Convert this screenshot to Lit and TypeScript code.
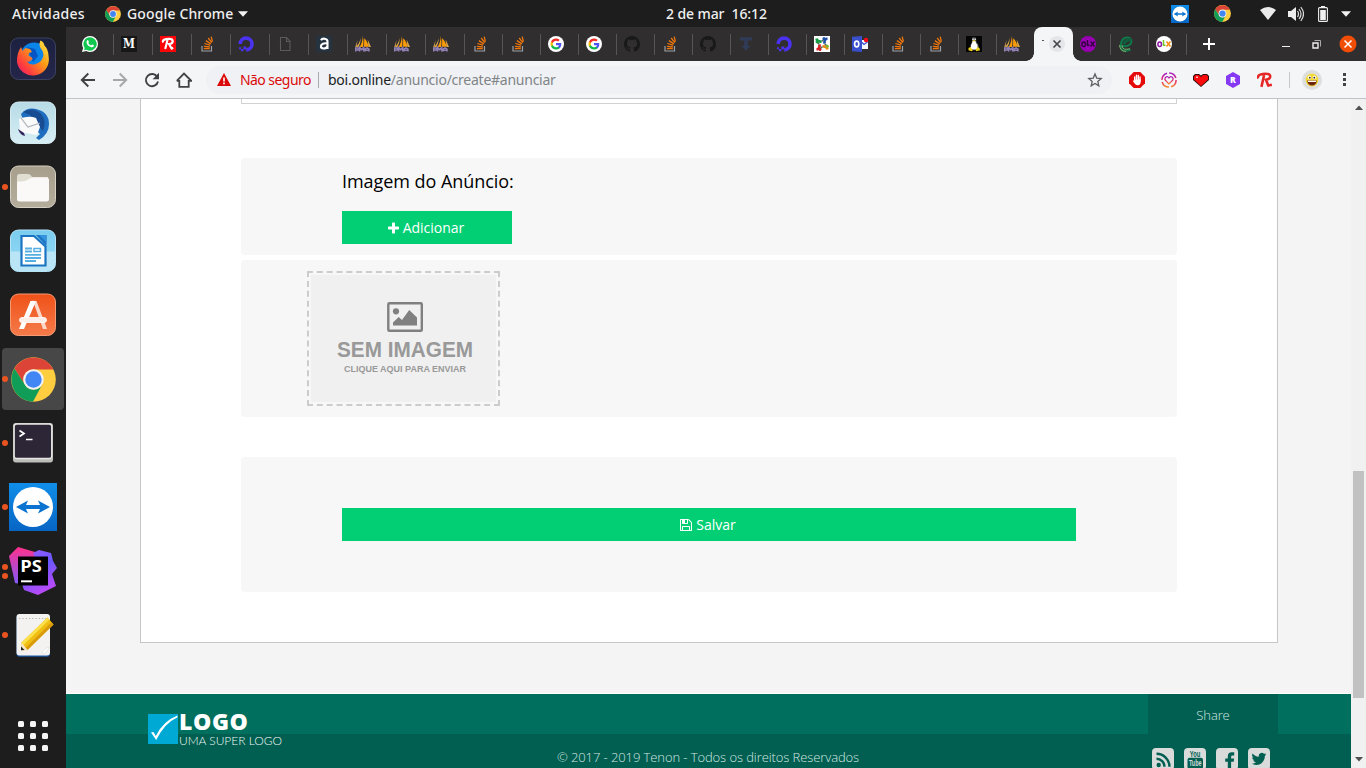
import { LitElement, html, svg, css } from "lit";
import { customElement } from "lit/decorators.js";

const chrome = (size: number) => html`<svg width=${size} height=${size} viewBox="1.5 1.5 45 45">
  <circle cx="24" cy="24" r="22.3" fill="#ffcd40" />
  <path d="M4.9 13A22.3 22.3 0 0 1 43.9 14L24 14A10 10 0 0 0 15.3 29Z" fill="#db4437" />
  <path d="M4.9 13L15.3 29A10 10 0 0 0 32.7 29L23.5 46.3A22.3 22.3 0 0 1 4.9 13Z" fill="#0f9d58" />
  <circle cx="24" cy="24" r="10.3" fill="#f1f1f1" /><circle cx="24" cy="24" r="8.2" fill="#4285f4" />
</svg>`;

const arrowDown = html`<svg width="10" height="6" viewBox="0 0 10 6"><path d="M0 .3h10L5 5.7z" fill="#f2f2f2" /></svg>`;

const birdPath = "M23.953 4.57a10 10 0 01-2.825.775 4.958 4.958 0 002.163-2.723c-.951.555-2.005.959-3.127 1.184a4.92 4.92 0 00-8.384 4.482C7.69 8.095 4.067 6.13 1.64 3.162a4.822 4.822 0 00-.666 2.475c0 1.71.87 3.213 2.188 4.096a4.904 4.904 0 01-2.228-.616v.06a4.923 4.923 0 003.946 4.827 4.996 4.996 0 01-2.212.085 4.936 4.936 0 004.604 3.417 9.867 9.867 0 01-6.102 2.105c-.39 0-.779-.023-1.17-.067a13.995 13.995 0 007.557 2.209c9.053 0 13.998-7.496 13.998-13.985 0-.21 0-.42-.015-.63A9.935 9.935 0 0024 4.59z";

const favicons: Record<string, unknown> = {
  whatsapp: svg`<path d="M8 0a8 8 0 0 1 0 16q-2 0-3.800-1L0 16l1.100-4A8 8 0 0 1 8 0z" fill="#fff"/><path d="M8 1.300a6.700 6.700 0 1 1-3.500 12.400L2 14.300l.700-2.400A6.700 6.700 0 0 1 8 1.300z" fill="#10c850"/><path d="M5.300 4.200q.700-.5 1 .2l.6 1.400q.1.400-.6 1.100 1 1.800 2.700 2.500.900-1 1.200-.9l1.600.8q.4.300-.1 1.300-.9 1-2.400.7Q5.600 10.200 4.600 7q-.4-1.700.7-2.800z" fill="#fff"/>`,
  medium: svg`<path d="M0 0h16v16H0z" fill="#171717"/><text x="8" y="12.300" text-anchor="middle" font-family="DejaVu Serif" font-weight="700" font-size="12" textLength="12" lengthAdjust="spacingAndGlyphs" fill="#fff">M</text>`,
  rr: svg`<path d="M0 0h16v16H0z" fill="#fb0509"/><path d="M3.200 6.500C2 4 5 2.800 9 2.800c5 0 5 4.600 0 5.200l2.600 4.600 1.600-.8M7.800 3L5.200 13" fill="none" stroke="#fff" stroke-width="2.200"/>`,
  so: svg`<path d="M3 10v5h9.500v-5" fill="none" stroke="#9aa0a6" stroke-width="1.200"/><path d="M4.800 12.700h6M4.900 10.400l6 .6M5.400 7.500l5.700 1.700M6.900 4.600l5 3.300M9.200 2l3.600 4.700M12.200.7l1.200 5" stroke="#f0760b" stroke-width="1.300"/>`,
  ocean: svg`<path d="M8.200 13.900A5.900 5.900 0 1 0 2.200 8" fill="none" stroke="#4a32f0" stroke-width="3.600"/><path d="M5.400 10.500h2.900v2.900H5.400zM3 13.100h2.300v2.200H3zM1 11.200h2v2H1z" fill="#4a32f0"/>`,
  file: svg`<path d="M3.500 1.500h6l3.500 3.700v9.300H3.500zM9.500 1.500v4H13" fill="none" stroke="#5c5a5b" stroke-width="1.100"/>`,
  letterA: svg`<path d="M0 0h16v16H0z" fill="#24333f"/><path d="M5 4.200C6 2 11.500 2 11.500 5.500V13M11.400 7.400C8 7 4.900 7.500 4.900 10.300s5 3.200 6.500 0" fill="none" stroke="#fff" stroke-width="2.100"/>`,
  pma: svg`<path d="M7.800 0c.5 3 1.200 8 .2 11H4.700C6.500 8 7.700 4 7.800 0zM9.200 2.200c2.400 2.300 4.200 5.200 4.200 8.600H9z" fill="#f79a08"/><path d="M12.700 3.500l3.300 7.500h-2.600zM5.600 2c.1 4-.9 7-2.200 9H.6C3.300 9 4.900 6 5.600 2z" fill="#dba548"/><path d="M2.500 4l-.8 6.500-1.500.8z" fill="#d0a04c"/><path d="M.7 15.600v-3.700h2.800v2H.7m4 1.700v-4l2 2 2-2v4m1.300 0v-2.500l2-1.300 2 1.300v2.500m-3.500-1.300h3.300" fill="none" stroke="#9181b6" stroke-width="1.500"/>`,
  google: svg`<circle cx="8" cy="8" r="8" fill="#fff"/><g transform="translate(2 2) scale(.5)"><path fill="#4f55f5" d="M22.560 12.250c0-.78-.07-1.530-.2-2.250H12v4.260h5.920c-.26 1.370-1.040 2.530-2.210 3.310v2.770h3.570c2.080-1.920 3.280-4.740 3.280-8.090z"/><path fill="#12ba49" d="M12 23c2.970 0 5.460-.98 7.280-2.660l-3.570-2.770c-.98.66-2.230 1.060-3.710 1.060-2.860 0-5.290-1.930-6.160-4.530H2.180v2.840C3.990 20.530 7.700 23 12 23z"/><path fill="#fbbc05" d="M5.840 14.090c-.22-.66-.35-1.360-.35-2.090s.13-1.430.35-2.090V7.070H2.180C1.430 8.550 1 10.220 1 12s.43 3.450 1.180 4.930z"/><path fill="#f42a25" d="M12 5.380c1.620 0 3.060.56 4.210 1.640l3.150-3.150C17.450 2.090 14.970 1 12 1 7.700 1 3.990 3.470 2.180 7.070l3.660 2.840c.87-2.600 3.300-4.530 6.160-4.530z"/></g>`,
  github: svg`<path fill="#191919" d="M8 0C3.580 0 0 3.580 0 8c0 3.540 2.290 6.530 5.470 7.590.4.070.55-.17.55-.38 0-.19-.01-.82-.01-1.490-2.010.37-2.530-.49-2.690-.94-.09-.23-.48-.94-.82-1.130-.28-.15-.68-.52-.01-.53.63-.01 1.080.58 1.230.82.72 1.210 1.870.87 2.330.66.07-.52.28-.87.51-1.070-1.780-.2-3.640-.89-3.640-3.950 0-.87.31-1.590.82-2.150-.08-.2-.36-1.020.08-2.120 0 0 .67-.21 2.200.82.64-.18 1.320-.27 2-.27s1.360.09 2 .27c1.530-1.040 2.200-.82 2.200-.82.44 1.100.16 1.920.08 2.120.51.56.82 1.270.82 2.150 0 3.070-1.870 3.750-3.650 3.950.29.25.54.73.54 1.480 0 1.070-.01 1.930-.01 2.200 0 .21.15.46.55.38A8.010 8.010 0 0 0 16 8c0-4.420-3.580-8-8-8z"/>`,
  tee: svg`<path d="M2 1.300h12v3.300H9.800v5.200h2.700L8 14.700 3.500 9.800h2.700V4.600H2z" fill="#303b58"/>`,
  joomla: svg`<path d="M0 0h16v16H0z" fill="#fff"/><path d="M2.500 2.500q.5 3.500 5 3" fill="none" stroke="#159c44" stroke-width="2.700"/><path d="M13.500 2.500q-3.500.5-3 5" fill="none" stroke="#1c50aa" stroke-width="2.700"/><path d="M13.500 13.500q-.5-3.500-5-3" fill="none" stroke="#f18b18" stroke-width="2.700"/><path d="M2.500 13.500q3.500-.5 3-5" fill="none" stroke="#d81b24" stroke-width="2.700"/><path d="M7.500 5.500l3-3M10.500 7.500l3 3M8.500 10.500l-3 3M5.500 8.500l-3-2.500" stroke="#4b6a58" stroke-width="1.400"/><circle cx="3" cy="5.800" r="1.500" fill="#159c44"/><circle cx="10" cy="2.500" r="1.500" fill="#1c50aa"/><circle cx="13.300" cy="10.200" r="1.500" fill="#7ab92b"/><circle cx="6" cy="13.500" r="1.500" fill="#d81b24"/>`,
  outlook: svg`<path d="M9 4h7v9H9z" fill="#f5f7ff"/><path d="M0 .8L10 0v16L0 15.200z" fill="#3850cc"/><ellipse cx="4.700" cy="8" rx="2.100" ry="2.900" fill="none" stroke="#fff" stroke-width="1.600"/><path d="M10 6.500l2 2 4-3" fill="none" stroke="#3850cc" stroke-width="1.300"/><circle cx="14" cy="4" r="2.200" fill="#f50b14"/>`,
  linux: svg`<path d="M0 0h16v16H0z" fill="#050505"/><path d="M6 2q2-2 4 0l.5 4q3 3 2 7l-4.500 1.500L4 12q0-3 2-6z" fill="#555"/><path d="M6.500 5h3q0 2 2 4v4.500H5V9q1.500-2 1.500-4z" fill="#fff"/><path d="M6.500 4.200h3L8 6zM2.500 12l2-1 2.500 3.300-1.500 1-3-1zM13.500 12l-2-1-2 3.300 1 1 3.500-1z" fill="#f0d21a"/><circle cx="7" cy="3.200" r=".8" fill="#fff"/><circle cx="9.200" cy="3.200" r=".8" fill="#fff"/>`,
  olxPurple: svg`<circle cx="8" cy="8" r="8" fill="#9a00b3"/><ellipse cx="3.700" cy="8.300" rx="1.800" ry="2.300" fill="none" stroke="#350041" stroke-width="1.500"/><path d="M7.500 4v5.200h2M10.500 5.500l4 5M14.500 5.500l-4 5" fill="none" stroke="#350041" stroke-width="1.500"/>`,
  olx: svg`<circle cx="8" cy="8" r="8" fill="#fff"/><ellipse cx="3.700" cy="8.300" rx="1.800" ry="2.300" fill="none" stroke="#8d18a8" stroke-width="1.500"/><path d="M7.500 4v5.200h2" fill="none" stroke="#73c82c" stroke-width="1.500"/><path d="M10.500 5.500l4 5M14.500 5.500l-4 5" fill="none" stroke="#f58a10" stroke-width="1.500"/>`,
  letterE: svg`<path d="M3.400 10C7 11 14 9.500 13.300 5 12.500 0 5.500.5 3.500 5.500 1.500 11 3.500 15 7.500 14.800q2.500 0 5-1.300" fill="none" stroke="#117a4b" stroke-width="2"/><path d="M5.500 8.500Q8 3 13 4" fill="none" stroke="#115c3e" stroke-width="3.500"/><path d="M1.500 9Q2 15.500 8 15.500M4 9Q4 13.300 8 13.300l4-.5" fill="none" stroke="#7cae6d"/>`,
};

const favicon = (name: string) => html`<svg width="16" height="16" viewBox="0 0 16 16">${favicons[name]}</svg>`;

const wideTabs = ["whatsapp", "medium", "rr", "so", "ocean", "file", "letterA", "pma", "pma", "pma"];
const tabs = ["so", "so", "google", "google", "github", "so", "github", "tee", "ocean", "joomla", "outlook", "so", "so", "linux", "pma"];
const tabsAfter = ["olxPurple", "letterE", "olx"];

const teamviewer = (size: number) => html`<svg width=${size} height=${size} viewBox="0 0 48 48">
  <defs><linearGradient id="tv" x2="0" y2="1"><stop stop-color="#108ee9" /><stop offset="1" stop-color="#0765c4" /></linearGradient></defs>
  <path d="M0 0h48v48H0z" fill="url(#tv)" /><circle cx="24" cy="24" r="20" fill="#fff" />
  <path d="M7 24l12-6.500-2 4.500h14l-2-4.500L41 24l-12 6.500 2-4.500H17l2 4.500z" fill="#0b74d1" /></svg>`;

const tile = (id: string, top: string, bottom: string, edge: string) => svg`
  <defs><linearGradient id=${id} x2="0" y2="1"><stop stop-color=${top}/><stop offset="1" stop-color=${bottom}/></linearGradient></defs>
  <rect x="1.500" y="3" width="45" height="41.500" rx="8" fill=${`url(#${id})`} stroke=${edge}/>`;

const app = (inner: unknown) => html`<svg width="48" height="48" viewBox="0 0 48 48">${inner}</svg>`;

const dock: { icon: unknown; dots: number; active?: boolean }[] = [
  { dots: 0, icon: app(svg`${tile("ff", "#1d2140", "#242649", "#3d4263")}
    <defs><linearGradient id="fox" x1="1" y1="0" x2="0" y2="1"><stop stop-color="#fff04a"/><stop offset=".4" stop-color="#ff9d16"/><stop offset=".75" stop-color="#ff3d3e"/><stop offset="1" stop-color="#e6157a"/></linearGradient></defs>
    <circle cx="25" cy="21" r="13.500" fill="#0a84e8"/><path d="M18 12l8 2 3 7-5 6z" fill="#0754c4"/>
    <path d="M12 12l1.500 4 3-3 4.500 1 2 3-3 1-.5 3q4 1 4 3-3 4-6 2 4 5 9 3 7-2 8-9 0-4-3-7-2-4 0-7.500 3 1 4 5 4 4 4.200 11.500A16 16 0 0 1 8 27q-.5-8 4-15z" fill="url(#fox)"/>`) },
  { dots: 0, icon: app(svg`${tile("tb", "#b6dbe6", "#d7eef4", "#d5eaf0")}
    <path d="M12 15Q18 8 27 10q13 3 13 15 0 10-10 16l-3-2 4-4-18-17z" fill="#1f6dbe"/><path d="M14 13q10-6 18 2 6 7 2 17l-6-7-7-9z" fill="#184c92"/>
    <path d="M10 20q10-4 17-1l4 9-3 8-17-3z" fill="#fafafa"/><path d="M12 19l7 9 12-4" fill="none" stroke="#aeb1b8" stroke-width="1.200"/><path d="M9 30q2 6 7 7l-1-3z" fill="#34235d"/>`) },
  { dots: 1, icon: app(svg`${tile("fl", "#a79e8c", "#b5ad9b", "#d5d0c3")}
    <path d="M8 13.500q0-2.500 2.500-2.500H19q2 0 3 1.500l1 1.500H39v8H8z" fill="#e0ddd1"/><path d="M8 18.500q8 .5 12-2.500 2-1.500 4-1.500h13.500q2.500 0 2.500 2.500V36q0 2.500-2.500 2.500h-27Q8 38.500 8 36z" fill="#faf9f7"/>`) },
  { dots: 0, icon: app(svg`${tile("wr", "#7accef", "#9adcf6", "#b6e4f6")}<path d="M2 24.500h44v12q0 7-8 7.500H10q-8-.5-8-7.500z" fill="#b9e5f6"/>
    <path d="M12.500 9H25l11.500 10.500v19h-24z" fill="#fff" stroke="#1b74c2" stroke-width="2.200"/><path d="M27 8h10.500v11z" fill="#1b74c2"/><path d="M30 8h7.500v7.500" fill="#3592dc"/>
    <path d="M16 21.500h7M16 24.500h7M16 27.800h16M16 31h16M16 34h11" stroke="#57aee2" stroke-width="1.800"/><path d="M25 21.500h6.500v3H25z" fill="none" stroke="#57aee2" stroke-width="1.500"/>`) },
  { dots: 0, icon: app(svg`${tile("sw", "#f05118", "#f47b4a", "#f69a75")}
    <path d="M21.500 10h5.500L15 38h-5z" fill="#fff"/><path d="M24 10h3.500L38 38h-4z" fill="#fbd9ca"/><path d="M21 10.500q3-1.500 6 0l-2 4z" fill="#fff"/><rect x="10.500" y="26.500" width="27" height="5" rx="2.500" fill="#fdeee8" stroke="#fff" stroke-width=".8"/>`) },
  { dots: 1, active: true, icon: chrome(45) },
  { dots: 1, icon: app(svg`<rect x="4" y="4" width="40" height="39.500" rx="3" fill="#bdbdb9"/><rect x="5.200" y="5" width="37.500" height="34.500" rx="2.500" fill="#2c2636" stroke="#e5e5e2" stroke-width="1.300"/>
    <path d="M10.500 11.500l4.500 3-4.500 3" fill="none" stroke="#fff" stroke-width="1.700"/><path d="M17 20.500h6.500" stroke="#fff" stroke-width="1.500"/>`) },
  { dots: 1, icon: teamviewer(48) },
  { dots: 2, icon: app(svg`<defs><linearGradient id="ps1" x2="0" y2="1"><stop stop-color="#ff318c"/><stop offset="1" stop-color="#7b5bff"/></linearGradient><linearGradient id="ps2" x2=".4" y2="1"><stop stop-color="#9b5cff"/><stop offset=".5" stop-color="#6b57ff"/><stop offset="1" stop-color="#b74af7"/></linearGradient></defs>
    <path d="M0 9L9 0l17 5 5 10-7 24-18-3z" fill="url(#ps1)"/><path d="M24 6l6-3 12 3 2 8 4 7-5 6 4 12-18 9-14-5-2-6 20-10z" fill="url(#ps2)"/><path d="M9 9.500h30v29H9z" fill="#000"/>
    <text x="11.200" y="24.800" font-family="Open Sans" font-size="16.500" font-weight="700" textLength="21.500" lengthAdjust="spacingAndGlyphs" fill="#fff">PS</text><path d="M12 34.300h11" stroke="#fff" stroke-width="2"/>`) },
  { dots: 1, icon: app(svg`<rect x="7.500" y="4" width="33.500" height="41.700" rx="3" fill="#1a57a5"/><rect x="7.500" y="3" width="33.500" height="41.500" rx="3" fill="#f3f2f0"/><path d="M10 7.500h29" stroke="#b7b5b3" stroke-dasharray="1.300 2"/><path d="M33 44q1-7 8-8l-6 7z" fill="#fff" stroke="#d6d4d1" stroke-width=".5"/>
    <path d="M12.500 31.500L38.500 6.500l6 7L18.500 39l-6.500.2z" fill="#f0bd13"/><path d="M12.500 31.500L38.500 6.500l2 2-26 25.500z" fill="#fbe04b"/><path d="M18.500 39l26-25.500-2-2.300L16.500 37z" fill="#d99b0b"/><path d="M12.500 31.500l6 7.500-6.500.2z" fill="#f4e5c8"/><path d="M12 35.500l3.500 3.500-3.500.2z" fill="#222"/>`) },
];

const social: unknown[] = [
  svg`<circle cx="6.700" cy="17" r="2.200" fill="#005f50"/><path d="M4.500 10.800a8 8 0 0 1 8 8M4.500 5.800a13 13 0 0 1 13 13" fill="none" stroke="#005f50" stroke-width="2.400"/>`,
  svg`<text x="11" y="8.500" text-anchor="middle" font-family="Liberation Sans" font-weight="700" font-size="9" textLength="10.500" lengthAdjust="spacingAndGlyphs" fill="#005f50">You</text><rect x="3.500" y="9.700" width="15.500" height="11.300" rx="2" fill="#005f50"/><text x="11.200" y="18" text-anchor="middle" font-family="Liberation Sans" font-weight="700" font-size="8.500" textLength="12.500" lengthAdjust="spacingAndGlyphs" fill="#d8dbda">Tube</text>`,
  svg`<path d="M11.800 22v-8.300H9.200v-3.200h2.600V8.200q0-3.900 4-3.900h2.400v3.200h-1.600q-1.500 0-1.500 1.400v1.600h3l-.4 3.200h-2.600V22z" fill="#005f50"/>`,
  svg`<g transform="translate(3.500 3.500) scale(.62)"><path d=${birdPath} fill="#005f50"/></g>`,
];

@customElement("app-root")
export class AppRoot extends LitElement {
  static styles = css`
    :host { display: block; width: 1366px; height: 768px; overflow: hidden; font-family: "Open Sans", sans-serif; color: #000; }
    * { box-sizing: border-box; }
    svg { display: block; flex: none; }
    .desktop { display: grid; grid-template: 27px 741px / 66px 1300px; }
    .topbar { grid-column: 1 / 3; display: grid; grid-template-columns: 666px 1fr auto; align-items: center; background: #1d1d1d; color: #efefef; font: 500 14px/27px "Noto Sans", sans-serif; white-space: pre; }
    .top-left { display: flex; align-items: center; padding-left: 12px; }
    .activities { width: 93px; letter-spacing: .33px; }
    .app-name { width: 117px; padding-left: 6px; letter-spacing: .14px; }
    .clock { letter-spacing: -.1px; }
    .tray { display: flex; align-items: center; padding-right: 15px; }
    .tray-chrome { margin: 0 29px 0 24px; }
    .tray > svg:first-child { margin-right: 1px; }
    .tray-volume { margin: 0 14px 0 12px; }
    .tray-menu { margin-left: 13px; }
    .dock { display: flex; flex-direction: column; background: #1d1d1d; }
    .dock-item { position: relative; height: 64px; display: flex; align-items: center; justify-content: center; }
    .dock-item.active::before { content: ""; position: absolute; inset: 1px 2px; border-radius: 4px; background: #474747; }
    .dock-item svg { position: relative; }
    .dots { position: absolute; left: 2px; top: 0; height: 64px; display: flex; flex-direction: column; justify-content: center; gap: 3px; }
    .dots i { width: 6px; height: 6px; border-radius: 50%; background: #e95420; }
    .apps { display: grid; grid-template-columns: repeat(3, 6px); gap: 6px; margin: 54px 0 0 18px; }
    .apps i { height: 6px; border-radius: 1.500px; background: #f5f5f5; }
    .window { display: grid; grid-template-rows: 34px 38px 669px; }
    .tabstrip { display: flex; background: #302e2f; padding-left: 9px; }
    .tab { width: 38px; padding: 9px 0 0 7px; background: linear-gradient(#575556, #575556) right 7px / 1px 21px no-repeat; }
    .tab.wide { width: 39px; }
    .tab.plain { background: none; width: 37px; }
    .tab.current { position: relative; width: 39px; padding: 0 8px 0 8px; display: flex; align-items: center; gap: 5px; background: #f4f5f7; border-radius: 8px 8px 0 0; }
    .tab.current::before, .tab.current::after { content: ""; position: absolute; bottom: 0; width: 8px; height: 8px; }
    .tab.current::before { right: 100%; background: radial-gradient(circle at 0 0, transparent 7.500px, #f4f5f7 8px); }
    .tab.current::after { left: 100%; background: radial-gradient(circle at 100% 0, transparent 7.500px, #f4f5f7 8px); }
    .mark { width: 3px; height: 1px; background: #555; margin-bottom: 8px; }
    .tab-close { width: 16px; height: 16px; border-radius: 50%; background: #e5e6e9; }
    .controls { display: flex; align-items: center; margin-left: auto; padding-right: 9px; }
    .new-tab { margin: 11px 0 0 16px; }
    .ctl-restore { margin: 0 18px 0 22px; }
    .toolbar { display: flex; align-items: center; background: #f4f5f7; border-bottom: 1px solid #bfc3ca; padding-left: 14px; }
    .nav { display: flex; gap: 16px; }
    .omnibox { display: flex; align-items: center; width: 906px; height: 28px; margin-left: 14px; padding: 0 9px 0 11px; border-radius: 14px; background: #eff1f4; font: 14px/28px "Noto Sans", sans-serif; }
    .insecure { color: #db0a0a; margin-left: 9px; width: 78px; letter-spacing: -.56px; white-space: nowrap; }
    .omni-sep { width: 1px; height: 16px; background: #a7a9ac; margin-right: 9px; }
    .url { color: #818487; letter-spacing: -.25px; white-space: nowrap; }
    .url b { font-weight: 400; color: #202124; }
    .star { margin-left: auto; }
    .extensions { display: flex; align-items: center; gap: 16px; margin-left: 17px; }
    .tool-sep { width: 1px; height: 16px; background: #c6c8cb; margin-left: 16px; }
    .avatar { margin: 0 21px 0 12px; }
    .viewport { display: grid; grid-template-columns: 1285px 15px; }
    .page { display: flex; flex-direction: column; height: 669px; overflow: hidden; background: #f4f4f4; }
    .card { width: 1138px; height: 544px; flex: none; margin: 0 0 50px 74px; padding: 0 100px; border: 1px solid #c6c6c6; border-top: 0; background: #fff; }
    .field-end { height: 5px; border: 1px solid #d2d2d2; border-top: 0; margin-bottom: 54px; }
    .panel { background: #f7f7f7; border-radius: 4px; }
    .panel.upload { height: 97px; padding: 10px 101px; margin-bottom: 5px; }
    .panel.preview { height: 157px; padding: 11px 66px; margin-bottom: 40px; }
    .panel.save { height: 135px; padding: 51px 101px; }
    .title { font-size: 18px; line-height: 26px; margin-bottom: 17px; letter-spacing: -.05px; }
    .button { display: flex; align-items: center; justify-content: center; gap: 4px; height: 33px; padding-right: 2px; background: #02cf74; color: #fff; font-size: 14px; line-height: 33px; }
    .button.add { width: 170px; }
    .dropzone { width: 193px; height: 135px; padding: 2px; border: 2px dashed #ccc; }
    .footer { flex: none; height: 76px; display: grid; grid-template-columns: 410px 464px 1fr; border-top: 1px solid #fff; background: linear-gradient(#016f5d 40px, #005f50 40px); color: #d5e6e2; }
    .brand { display: flex; gap: 1px; padding: 20px 0 0 82px; }
    .brand-name { font-weight: 800; font-size: 23px; line-height: 15px; color: #fff; letter-spacing: .6px; }
    .brand-sub { font: 300 12px/14px Lato, sans-serif; color: #f0f8f6; margin-top: 5px; letter-spacing: -.02px; }
    .copyright { font-weight: 300; font-size: 13px; line-height: 18px; padding-top: 54px; text-align: center; letter-spacing: -.09px; }
    .share-col { width: 130px; margin-left: 208px; }
    .share { height: 40px; background: #005f50; text-align: center; font-weight: 300; font-size: 13px; line-height: 43px; letter-spacing: -.1px; margin-bottom: 14px; }
    .socials { display: flex; gap: 10px; padding-left: 4px; }
    .scrollbar { display: flex; flex-direction: column; align-items: center; background: #f1f1f1; padding: 6px 0 6px; }
    .thumb { width: 11px; height: 227px; margin: 361px 0 auto; background: #c1c1c1; }
  `;

  render() {
    return html`<div class="desktop">
      <header class="topbar">
        <div class="top-left"><span class="activities">Atividades</span>${chrome(16)}<span class="app-name">Google Chrome</span>${arrowDown}</div>
        <span class="clock">2 de mar  16:12</span>
        <div class="tray">
          ${teamviewer(18)}
          <span class="tray-chrome">${chrome(17)}</span>
          <svg width="16" height="13" viewBox="0 0 16 13"><path d="M0 3Q8-3 16 3L8 13z" fill="#ebebeb" /></svg>
          <span class="tray-volume"><svg width="16" height="16" viewBox="0 0 16 16"><path d="M0 5h3l5-4v14l-5-4H0z" fill="#ededed" /><path d="M9.500 5q2 3 0 6M11 3q4 5 0 10M12.800 1q5.400 7 0 14" fill="none" stroke="#dcdcdc" stroke-width="1.200" /></svg></span>
          <svg width="10" height="16" viewBox="0 0 10 16"><path d="M3 0h4v2H3z" fill="#eee" /><rect x=".6" y="1.600" width="8.800" height="13.800" rx="1" fill="none" stroke="#eee" stroke-width="1.100" /><path d="M2.200 4h5.600v10H2.200z" fill="#eee" /></svg>
          <span class="tray-menu">${arrowDown}</span>
        </div>
      </header>

      <nav class="dock">
        ${dock.map((d) => html`<div class="dock-item ${d.active ? "active" : ""}"><div class="dots">${Array.from({ length: d.dots }, () => html`<i></i>`)}</div>${d.icon}</div>`)}
        <div class="apps">${Array.from({ length: 9 }, () => html`<i></i>`)}</div>
      </nav>

      <main class="window">
        <div class="tabstrip">
          ${wideTabs.map((t) => html`<div class="tab wide">${favicon(t)}</div>`)}
          ${tabs.map((t, i) => html`<div class="tab ${i === tabs.length - 1 ? "plain" : ""}">${favicon(t)}</div>`)}
          <div class="tab current"><span class="mark"></span>
            <span class="tab-close"><svg width="16" height="16" viewBox="0 0 16 16"><path d="M4.500 4.500l7 7M11.500 4.500l-7 7" stroke="#454649" stroke-width="1.700" /></svg></span></div>
          ${tabsAfter.map((t) => html`<div class="tab">${favicon(t)}</div>`)}
          <span class="new-tab"><svg width="12" height="12" viewBox="0 0 12 12"><path d="M6 0v12M0 6h12" stroke="#fff" stroke-width="2" /></svg></span>
          <div class="controls">
            <svg width="8" height="8" viewBox="0 0 8 8"><path d="M0 6.500h8" stroke="#eee" /></svg>
            <span class="ctl-restore"><svg width="9" height="9" viewBox="0 0 9 9"><path d="M1 3h5v5H1z" fill="none" stroke="#eee" stroke-width="1.400" /><path d="M2.500.5h6v6" fill="none" stroke="#aaa" /></svg></span>
            <svg width="18" height="18" viewBox="0 0 18 18"><circle cx="9" cy="9" r="8.500" fill="#f04e08" /><path d="M5.500 5.500l7 7M12.500 5.500l-7 7" stroke="#fff" stroke-width="1.500" /></svg>
          </div>
        </div>

        <div class="toolbar">
          <div class="nav">
            <svg width="16" height="16" viewBox="0 0 16 16"><path d="M15 8H2.500M8.300 1.500L1.800 8l6.500 6.500" fill="none" stroke="#3f4145" stroke-width="1.900" /></svg>
            <svg width="16" height="16" viewBox="0 0 16 16"><path d="M1 8h12.500M7.700 1.500L14.200 8l-6.500 6.500" fill="none" stroke="#a5a7aa" stroke-width="1.900" /></svg>
            <svg width="16" height="16" viewBox="0 0 16 16"><path d="M13.300 5A6.100 6.100 0 1 0 14 9.500" fill="none" stroke="#3f4145" stroke-width="1.900" /><path d="M15 .8v6.400H8.600z" fill="#3f4145" /></svg>
            <svg width="16" height="16" viewBox="0 0 16 16"><path d="M3.300 8v6.800h9.400V8M.8 8.800L8 1.500l7.200 7.300h-2.500M.8 8.800h2.500" fill="none" stroke="#3f4145" stroke-width="1.800" /></svg>
          </div>
          <div class="omnibox">
            <svg width="14" height="13" viewBox="0 0 14 13"><path d="M7 0l7 13H0z" fill="#db0a0a" /><path d="M7 4.500v4M7 9.600v1.600" stroke="#fff" stroke-width="1.600" /></svg>
            <span class="insecure">Não seguro</span><span class="omni-sep"></span>
            <span class="url"><b>boi.online</b>/anuncio/create#anunciar</span>
            <svg class="star" width="16" height="16" viewBox="0 0 16 16"><path d="M8 2l1.700 4.100 4.500.4-3.400 2.900 1 4.400L8 11.500l-3.800 2.300 1-4.400L1.800 6.500l4.500-.4z" fill="none" stroke="#5b5e62" stroke-width="1.300" /></svg>
          </div>
          <div class="extensions">
            <svg width="16" height="16" viewBox="0 0 16 16"><path d="M4.700 0h6.600L16 4.700v6.600L11.300 16H4.700L0 11.300V4.700z" fill="#e50909" /><path d="M5.700 8.500V5M7.500 8V3.300M9.300 8V3.500M11 8.500V5" stroke="#fff" stroke-width="1.400" stroke-linecap="round" /><path d="M5 7.500h6.700V10q0 3-3 3.300Q7 13.300 6 12L3.800 9l1-.8L6 9z" fill="#fff" /></svg>
            <svg width="16" height="16" viewBox="0 0 16 16"><defs><linearGradient id="ig" x2="0" y2="1"><stop stop-color="#a71bc0" /><stop offset=".55" stop-color="#e52a68" /><stop offset="1" stop-color="#f8882b" /></linearGradient></defs><g fill="none" stroke="url(#ig)" stroke-width="1.500"><circle cx="8" cy="8" r="7.100" stroke-dasharray="9 2.150" /><path d="M8 12L4.300 8.200Q3.300 6 5 5t3 1q1.300-2 3-1t.7 3.200z" stroke-width="1.200" /></g></svg>
            <svg width="16" height="16" viewBox="0 0 16 16"><path d="M2 2h4l2 1.500L10 2h4l2 2v4l-8 7L0 8V4z" fill="#34100f" /><path d="M2.500 3h3.300L8 5l2.200-2h3.300L15 4.500v3L8 14 1 7.500v-3z" fill="#fb0b0b" /><path d="M3 4.500h2v1.500H3z" fill="#ffc2c0" /></svg>
            <svg width="16" height="16" viewBox="0 0 16 16"><path d="M8 0l7 4v8l-7 4-7-4V4z" fill="#8539f3" /><text x="8" y="11.200" text-anchor="middle" font-family="Open Sans" font-size="8.500" font-weight="800" fill="#fff">R</text></svg>
            <svg width="16" height="16" viewBox="0 0 17 16"><path d="M1.200 6.300C-.500 2.300 6 1.300 10 1.400c5.500 0 5.500 5.500-.5 6.300l2.500 6.200 3.800-.8M7.800 1.600L4.700 15.300" fill="none" stroke="#e62625" stroke-width="2.700" /></svg>
          </div>
          <span class="tool-sep"></span>
          <span class="avatar"><svg width="20" height="20" viewBox="0 0 20 20"><circle cx="10" cy="10" r="10" fill="#dedede" /><circle cx="10" cy="10" r="6.400" fill="#f3d937" /><circle cx="7.500" cy="7.500" r="1.700" fill="#fff" /><circle cx="12.500" cy="7.500" r="1.700" fill="#fff" /><circle cx="7.800" cy="7.700" r=".9" fill="#322" /><circle cx="12.300" cy="7.700" r=".9" fill="#322" /><path d="M5.200 10.500h9.600q-.5 5-4.800 5t-4.800-5z" fill="#6d2410" /><path d="M6 10.700h8v1.300H6z" fill="#fff" /></svg></span>
          <svg width="3" height="13" viewBox="0 0 3 13"><path d="M0 0h3v3H0zM0 5h3v3H0zM0 10h3v3H0z" fill="#424448" /></svg>
        </div>

        <div class="viewport">
          <div class="page">
            <section class="card">
              <div class="field-end"></div>
              <div class="panel upload">
                <div class="title">Imagem do Anúncio:</div>
                <div class="button add"><svg width="11" height="14" viewBox="0 0 1408 1792"><path fill="#fff" d="M1408 800v192q0 40-28 68t-68 28H896v416q0 40-28 68t-68 28H608q-40 0-68-28t-28-68v-416H96q-40 0-68-28T0 992V800q0-40 28-68t68-28h416V288q0-40 28-68t68-28h192q40 0 68 28t28 68v416h416q40 0 68 28t28 68z" /></svg><span>Adicionar</span></div>
              </div>
              <div class="panel preview">
                <div class="dropzone"><svg width="185" height="127" viewBox="0 0 185 127"><path d="M0 0h185v127H0z" fill="#f0f0f0" />
                  <rect x="77.300" y="28.300" width="33.500" height="27.500" rx="1" fill="none" stroke="#808080" stroke-width="2.400" /><circle cx="85" cy="36.300" r="3.100" fill="#808080" /><path d="M82 50.500v-3l5.700-5.500 3.300 3 7.200-10 7.800 7.500v8z" fill="#808080" />
                  <text x="26" y="81.800" font-family="Liberation Sans" font-weight="700" font-size="21.500" textLength="136" lengthAdjust="spacingAndGlyphs" fill="#999">SEM IMAGEM</text>
                  <text x="33" y="97.300" font-family="Liberation Sans" font-weight="700" font-size="9" textLength="122" lengthAdjust="spacingAndGlyphs" fill="#999">CLIQUE AQUI PARA ENVIAR</text></svg></div>
              </div>
              <div class="panel save">
                <div class="button"><svg width="12" height="14" viewBox="128 0 1536 1792"><path fill="#fff" d="M512 1536h768v-384H512v384zm896 0h128V640q0-14-10-38.500t-20-34.500l-281-281q-10-10-34-20t-39-10v416q0 40-28 68t-68 28H480q-40 0-68-28t-28-68V256H256v1280h128v-416q0-40 28-68t68-28h832q40 0 68 28t28 68v416zM1024 608V288q0-13-9.500-22.500T992 256H800q-13 0-22.500 9.500T768 288v320q0 13 9.500 22.500T800 640h192q13 0 22.500-9.500t9.500-22.500zm640 32v928q0 40-28 68t-68 28H224q-40 0-68-28t-28-68V224q0-40 28-68t68-28h928q40 0 88 20t76 48l280 280q28 28 48 76t20 88z" /></svg><span>Salvar</span></div>
              </div>
            </section>
            <footer class="footer">
              <div class="brand"><svg width="30" height="30" viewBox="0 0 30 30"><path d="M0 0h30v30H0z" fill="#00a9d4" /><path d="M3 18.500l2.500-.5 2.300 4Q15 7 29.500 1.500v1.700Q16 9.500 8.200 26z" fill="#fff" /></svg>
                <div><div class="brand-name">LOGO</div><div class="brand-sub">UMA SUPER LOGO</div></div></div>
              <div class="copyright">© 2017 - 2019 Tenon - Todos os direitos Reservados</div>
              <div class="share-col"><div class="share">Share</div>
                <div class="socials">${social.map((s) => html`<svg width="22" height="22" viewBox="0 0 22 22"><rect width="22" height="22" rx="4" fill="#d8dbda" />${s}</svg>`)}</div></div>
            </footer>
          </div>
          <div class="scrollbar">
            <svg width="8" height="5" viewBox="0 0 8 5"><path d="M4 .5L8 5H0z" fill="#505050" /></svg>
            <div class="thumb"></div>
            <svg width="8" height="5" viewBox="0 0 8 5"><path d="M0 0h8L4 4.500z" fill="#505050" /></svg>
          </div>
        </div>
      </main>
    </div>`;
  }
}
